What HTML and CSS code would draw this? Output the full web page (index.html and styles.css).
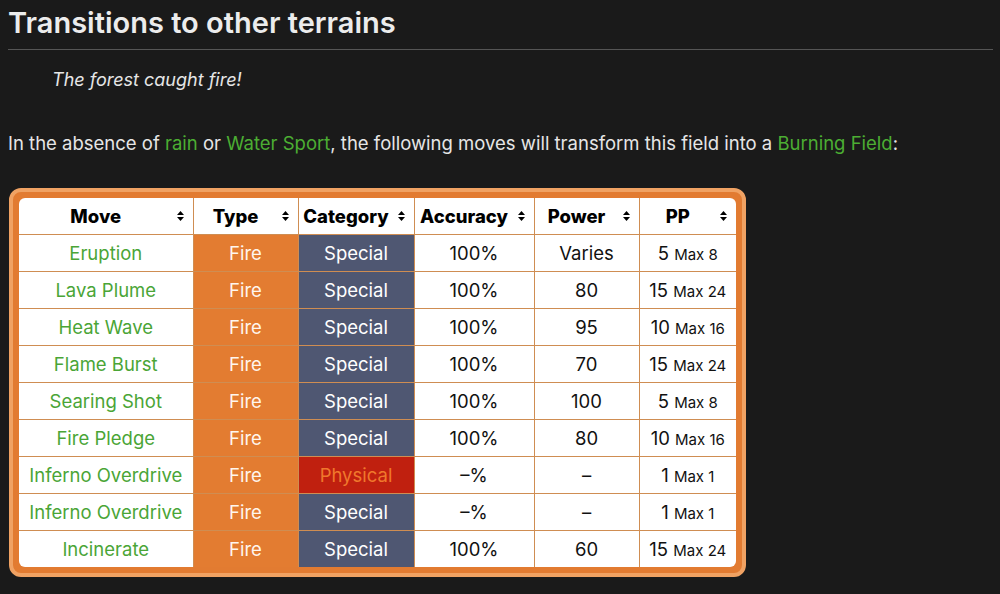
FILE: index.html
```html
<!DOCTYPE html>
<html lang="en">
<head>
<meta charset="utf-8">
<title>Transitions to other terrains</title>
<link rel="stylesheet" href="styles.css">
</head>
<body>
<h2 class="heading">Transitions to other terrains</h2>
<p class="quote">The forest caught fire!</p>
<p class="para">In the absence of <a class="link">rain</a> or <a class="link">Water Sport</a>, the following moves will transform this field into a <a class="link">Burning Field</a>:</p>
<div class="frame">
  <div class="clip">
    <table class="moves">
      <colgroup>
        <col class="c-move"><col class="c-type"><col class="c-cat"><col class="c-acc"><col class="c-pow"><col class="c-pp">
      </colgroup>
      <thead>
        <tr>
          <th><div class="th"><span class="tl">Move</span><svg class="sort" viewBox="0 0 7 10"><path d="M0 4 L3.5 0 L7 4 Z M0 6 L3.5 10 L7 6 Z"/></svg></div></th>
          <th><div class="th"><span class="tl">Type</span><svg class="sort" viewBox="0 0 7 10"><path d="M0 4 L3.5 0 L7 4 Z M0 6 L3.5 10 L7 6 Z"/></svg></div></th>
          <th><div class="th"><span class="tl">Category</span><svg class="sort" viewBox="0 0 7 10"><path d="M0 4 L3.5 0 L7 4 Z M0 6 L3.5 10 L7 6 Z"/></svg></div></th>
          <th><div class="th"><span class="tl">Accuracy</span><svg class="sort" viewBox="0 0 7 10"><path d="M0 4 L3.5 0 L7 4 Z M0 6 L3.5 10 L7 6 Z"/></svg></div></th>
          <th><div class="th"><span class="tl">Power</span><svg class="sort" viewBox="0 0 7 10"><path d="M0 4 L3.5 0 L7 4 Z M0 6 L3.5 10 L7 6 Z"/></svg></div></th>
          <th><div class="th"><span class="tl">PP</span><svg class="sort" viewBox="0 0 7 10"><path d="M0 4 L3.5 0 L7 4 Z M0 6 L3.5 10 L7 6 Z"/></svg></div></th>
        </tr>
      </thead>
      <tbody>
        <tr><td class="mv">Eruption</td><td class="fire">Fire</td><td class="special">Special</td><td>100%</td><td>Varies</td><td>5 <small>Max 8</small></td></tr>
        <tr><td class="mv">Lava Plume</td><td class="fire">Fire</td><td class="special">Special</td><td>100%</td><td>80</td><td>15 <small>Max 24</small></td></tr>
        <tr><td class="mv">Heat Wave</td><td class="fire">Fire</td><td class="special">Special</td><td>100%</td><td>95</td><td>10 <small>Max 16</small></td></tr>
        <tr><td class="mv">Flame Burst</td><td class="fire">Fire</td><td class="special">Special</td><td>100%</td><td>70</td><td>15 <small>Max 24</small></td></tr>
        <tr><td class="mv">Searing Shot</td><td class="fire">Fire</td><td class="special">Special</td><td>100%</td><td>100</td><td>5 <small>Max 8</small></td></tr>
        <tr><td class="mv">Fire Pledge</td><td class="fire">Fire</td><td class="special">Special</td><td>100%</td><td>80</td><td>10 <small>Max 16</small></td></tr>
        <tr><td class="mv">Inferno Overdrive</td><td class="fire">Fire</td><td class="physical">Physical</td><td>–%</td><td>–</td><td>1 <small>Max 1</small></td></tr>
        <tr><td class="mv">Inferno Overdrive</td><td class="fire">Fire</td><td class="special">Special</td><td>–%</td><td>–</td><td>1 <small>Max 1</small></td></tr>
        <tr><td class="mv">Incinerate</td><td class="fire">Fire</td><td class="special">Special</td><td>100%</td><td>60</td><td>15 <small>Max 24</small></td></tr>
      </tbody>
    </table>
  </div>
</div>
</body>
</html>
```
FILE: styles.css
```css
html, body {
  background: #1a1a1a;
}
body {
  margin: 0;
  padding: 4px 7px 0 8px;
  color: #e6e6e6;
  font-family: Inter, "Noto Sans", sans-serif;
}
.heading {
  margin: 0;
  font-size: 29px;
  font-weight: 600;
  line-height: 38px;
  padding-bottom: 7px;
  border-bottom: 1px solid #555;
  color: #ececec;
}
.quote {
  margin: 17px 0 0 44px;
  font-size: 18px;
  line-height: 26px;
  font-style: italic;
}
.para {
  margin: 37px 0 0 0;
  font-size: 18.5px;
  line-height: 26px;
}
.link {
  color: #4cae33;
  text-decoration: none;
}
.frame {
  display: inline-block;
  margin: 32px 0 0 1px;
  background: #e27b31;
  border: 4px solid #f0a263;
  border-radius: 12px;
  padding: 6px;
}
.clip {
  border-radius: 6px;
  overflow: hidden;
  background: #fff;
}
.moves {
  border-collapse: collapse;
  border-style: hidden;
  table-layout: fixed;
  width: 717px;
  background: #fff;
  color: #111;
  font-size: 18.5px;
}
.c-move { width: 174px; }
.c-type { width: 105px; }
.c-cat { width: 116px; }
.c-acc { width: 120px; }
.c-pow { width: 105px; }
.c-pp { width: 97px; }
.moves th, .moves td {
  border: 1px solid #cf8d52;
  text-align: center;
  padding: 0;
  white-space: nowrap;
}
.moves th {
  height: 36px;
  font-weight: 800;
  font-size: 18.5px;
  color: #000;
}
.moves td {
  height: 36px;
}
.th {
  display: flex;
  align-items: center;
  padding: 0 9px 0 0;
  gap: 4px;
}
.tl {
  flex: 1;
  text-align: center;
}
.sort {
  width: 7px;
  height: 10px;
  fill: #000;
  flex: none;
}
.mv {
  color: #4aa536;
}
.fire {
  background: #e37c31;
  color: #fff6ee;
}
.special {
  background: #4f5772;
  color: #fff;
}
.physical {
  background: #c0200f;
  color: #f0782c;
}
small {
  font-size: 15px;
}
```
